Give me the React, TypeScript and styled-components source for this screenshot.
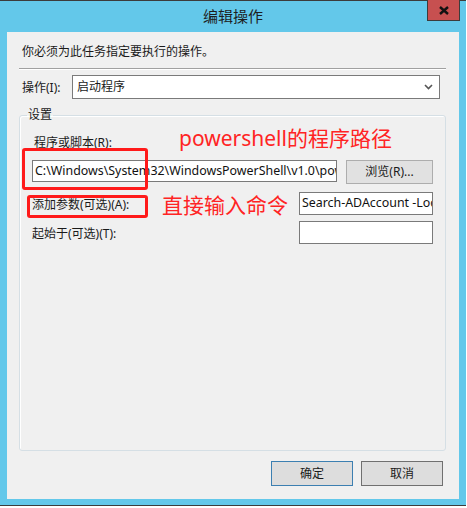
import React from "react";
import styled, { createGlobalStyle } from "styled-components";

const Global = createGlobalStyle`
  html, body { margin: 0; padding: 0; background: #ffffff; }
  body { font-family: "Noto Sans", "Noto Sans CJK SC", sans-serif; }
`;

const UI_FONT = `"Noto Sans", "Noto Sans CJK SC", sans-serif`;

const Window = styled.div`
  position: relative;
  width: 466px;
  height: 506px;
  box-sizing: border-box;
  background: #63c8ea;
  border-top: 1px solid #3c3c3c;
  border-bottom: 1px solid #3c3c3c;
  display: flex;
  flex-direction: column;
  font-family: ${UI_FONT};
`;

const TitleBar = styled.div`
  height: 31px;
  display: flex;
  align-items: center;
  justify-content: center;
`;

const Title = styled.div`
  font-family: "Noto Sans CJK SC", sans-serif;
  font-size: 15px;
  line-height: 20px;
  color: #1e1e1e;
  margin-top: -1px;
`;

const CloseButton = styled.div`
  position: absolute;
  top: -1px;
  right: 6px;
  width: 33px;
  height: 21px;
  box-sizing: border-box;
  background: #c75050;
  border: 1px solid #3c3c3c;
  border-top: none;
  display: flex;
  align-items: center;
  justify-content: center;
`;

const Client = styled.div`
  margin: 0 7px;
  height: 467px;
  background: #f0f0f0;
  box-sizing: border-box;
  padding: 12px 13px 0 12px;
  display: flex;
  flex-direction: column;
  font-size: 12px;
  color: #1a1a1a;
`;

const Intro = styled.div`
  padding-left: 3px;
  line-height: 16px;
`;

const Separator = styled.div`
  margin-top: 8px;
  height: 1px;
  background: #a0a0a0;
  border-bottom: 1px solid #ffffff;
`;

const ActionRow = styled.div`
  margin-top: 5px;
  display: flex;
  align-items: center;
  padding-left: 3px;
`;

const RowLabel = styled.div<{ $width?: number }>`
  width: ${(p) => p.$width ?? 50}px;
  line-height: 16px;
  white-space: nowrap;
  padding-top: 2px;
`;

const Select = styled.div`
  flex: 0 0 368px;
  height: 24px;
  box-sizing: border-box;
  border: 1px solid #7a7a7a;
  background: #ffffff;
  display: flex;
  align-items: center;
  justify-content: space-between;
  padding: 0 6px 0 4px;
  line-height: 16px;
`;

const Group = styled.fieldset`
  margin: 8px 0 0 0;
  padding: 12px 12px 0 12px;
  border: 1px solid #d5dfe5;
  border-radius: 3px;
  box-shadow: inset 1px 1px 0 #ffffff;
  height: 344px;
  box-sizing: border-box;
  min-width: 0;
`;

const Legend = styled.legend`
  margin-left: -5px;
  padding: 0 1px;
  line-height: 16px;
  font-size: 12px;
`;

const FieldLabel = styled.div`
  line-height: 16px;
  padding-left: 2px;
  color: #1a1a1a;
`;

const PathRow = styled.div`
  margin-top: 9px;
  display: flex;
  align-items: flex-start;
  gap: 9px;
`;

const TextBox = styled.div<{ $width: number; $height?: number }>`
  width: ${(p) => p.$width}px;
  height: ${(p) => p.$height ?? 22}px;
  box-sizing: border-box;
  border: 1px solid #7a7a7a;
  background: #ffffff;
  padding: 0 2px;
  font-family: "Noto Sans", sans-serif;
  font-size: 12.4px;
  line-height: 20px;
  white-space: nowrap;
  overflow: hidden;
  color: #111;
`;

const Button = styled.div`
  width: 87px;
  height: 24px;
  box-sizing: border-box;
  border: 1px solid #adadad;
  background: #e1e1e1;
  display: flex;
  align-items: center;
  justify-content: center;
  line-height: 16px;
`;

const FieldRow = styled.div<{ $gap: number }>`
  margin-top: ${(p) => p.$gap}px;
  display: flex;
  align-items: center;
  justify-content: space-between;
`;

const Footer = styled.div`
  margin-top: 10px;
  display: flex;
  justify-content: flex-end;
  gap: 8px;
  padding-right: 3px;
`;

const DialogButton = styled.div<{ $default?: boolean }>`
  width: 82px;
  height: 25px;
  box-sizing: border-box;
  border: 1px solid ${(p) => (p.$default ? "#3c7fb1" : "#707070")};
  background: #dddddd;
  display: flex;
  align-items: center;
  justify-content: center;
  line-height: 16px;
`;

const RedBox = styled.div<{ $x: number; $y: number; $w: number; $h: number }>`
  position: absolute;
  left: ${(p) => p.$x}px;
  top: ${(p) => p.$y}px;
  width: ${(p) => p.$w}px;
  height: ${(p) => p.$h}px;
  box-sizing: border-box;
  border: 3px solid #ff1a1a;
  border-radius: 3px;
`;

const RedNote = styled.div<{ $x: number; $y: number }>`
  position: absolute;
  left: ${(p) => p.$x}px;
  top: ${(p) => p.$y}px;
  color: #ff2424;
  font-family: "Noto Sans", "Noto Sans CJK SC", sans-serif;
  font-size: 21px;
  line-height: 26px;
  white-space: nowrap;
`;

const Chevron = () => (
  <svg width="9" height="6" viewBox="0 0 9 6">
    <path d="M1 1 L4.5 4.5 L8 1" fill="none" stroke="#555" strokeWidth="1.6" />
  </svg>
);

const CloseX = () => (
  <svg width="10" height="9" viewBox="0 0 10 9">
    <path d="M1 1 L9 8 M9 1 L1 8" fill="none" stroke="#111" strokeWidth="2.4" />
  </svg>
);

export default function App() {
  return (
    <>
      <Global />
      <Window>
        <TitleBar>
          <Title>编辑操作</Title>
        </TitleBar>
        <CloseButton>
          <CloseX />
        </CloseButton>
        <Client>
          <Intro>你必须为此任务指定要执行的操作。</Intro>
          <Separator />
          <ActionRow>
            <RowLabel>操作(I):</RowLabel>
            <Select>
              <span>启动程序</span>
              <Chevron />
            </Select>
          </ActionRow>
          <Group>
            <Legend>设置</Legend>
            <FieldLabel>程序或脚本(R):</FieldLabel>
            <PathRow>
              <TextBox $width={305}>C:\Windows\System32\WindowsPowerShell\v1.0\powershell.exe</TextBox>
              <Button>浏览(R)...</Button>
            </PathRow>
            <FieldRow $gap={8}>
              <RowLabel $width={200}>添加参数(可选)(A):</RowLabel>
              <TextBox $width={134} $height={23}>Search-ADAccount -LockedOut</TextBox>
            </FieldRow>
            <FieldRow $gap={6}>
              <RowLabel $width={200}>起始于(可选)(T):</RowLabel>
              <TextBox $width={134} $height={23}></TextBox>
            </FieldRow>
          </Group>
          <Footer>
            <DialogButton $default>确定</DialogButton>
            <DialogButton>取消</DialogButton>
          </Footer>
        </Client>
        <RedBox $x={22} $y={147} $w={126} $h={42} />
        <RedBox $x={27} $y={194} $w={121} $h={23} />
        <RedNote $x={179} $y={124}>powershell的程序路径</RedNote>
        <RedNote $x={162} $y={191}>直接输入命令</RedNote>
      </Window>
    </>
  );
}
